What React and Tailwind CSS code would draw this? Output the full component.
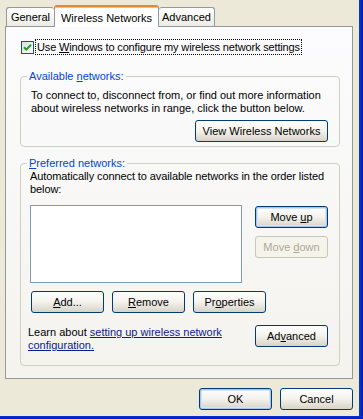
import { clsx } from 'clsx'

// ── Button ────────────────────────────────────────────────────
function Btn({ children, focus, disabled, className }) {
  return (
    <button
      className={clsx(
        'h-[22px] w-[73px] rounded-[3px] border text-[11px] leading-none whitespace-nowrap',
        disabled
          ? 'border-[#c9c7ba] bg-[#f5f4ea] text-[#aca899]'
          : 'border-[#003c74] bg-linear-to-b from-white via-[#f3f2ec] to-[#d8d3c6] text-black',
        focus && 'shadow-[inset_0_0_0_1px_#a9c4ee,inset_0_0_0_2px_#d4e2f7]',
        className
      )}
    >
      {children}
    </button>
  )
}

// ── Tab ───────────────────────────────────────────────────────
function Tab({ children, active, className }) {
  return (
    <div
      className={clsx(
        'flex justify-center whitespace-nowrap',
        active
          ? 'h-[22px] items-start pt-[3px] bg-white border-x border-[#919b9c] border-t-2 border-t-[#e68b2c] shadow-[inset_0_1px_0_#ffc73c] rounded-t-[3px]'
          : 'h-[19px] mb-px items-center pt-px bg-linear-to-b from-white to-[#ecebe5] border-t border-[#919b9c] rounded-t-[3px]',
        className
      )}
    >
      {children}
    </div>
  )
}

function CheckBox() {
  return (
    <div className="w-[13px] h-[13px] border border-[#1c5180] bg-linear-to-br from-[#dcdcd7] to-white flex items-center justify-center">
      <svg width="9" height="9" viewBox="0 0 9 9">
        <path d="M1 4.2 L3.3 6.6 L8 1.8" fill="none" stroke="#21a121" strokeWidth="2" />
      </svg>
    </div>
  )
}

export default function App() {
  return (
    <div className="w-[363px] h-[419px] flex flex-col font-['Liberation_Sans',Arial,sans-serif] text-[11px] text-black">
      <div className="flex h-[416px]">
        <div className="w-[359px] bg-[#ece9d8] pl-[5px] pt-[5px]">
          {/* tabs */}
          <div className="relative z-10 -mb-px flex items-end h-[22px] pl-px">
            <Tab className="w-[48px] border-l">General</Tab>
            <Tab active className="w-[105px]">Wireless Networks</Tab>
            <Tab className="w-[56px] border-r">Advanced</Tab>
          </div>

          {/* panel */}
          <div className="w-[348px] h-[353px] border border-[#919b9c] bg-linear-to-b from-[#fcfcfe] to-[#f4f3ee] pl-[14px] pt-[12px]">
            <div className="flex items-center h-[16px]">
              <div className="ml-px">
                <CheckBox />
              </div>
              <span className="ml-px h-[16px] border border-dotted border-black px-px leading-[14px] whitespace-nowrap tracking-[-0.15px]">
                Use <u>W</u>indows to configure my wireless network settings
              </span>
            </div>

            <fieldset className="mt-[15px] w-[320px] h-[77px] border border-[#d0d0bf] rounded-[4px] pl-[10px] pr-[11px]">
              <legend className="-ml-[4px] px-[2px] leading-[13px] text-[#0046d5]">
                Available <u>n</u>etworks:
              </legend>
              <p className="mt-[6px] leading-[13px] whitespace-nowrap">
                To connect to, disconnect from, or find out more information
                <br />
                about wireless networks in range, click the button below.
              </p>
              <div className="mt-[5px] flex justify-end">
                <Btn className="w-[133px]">View Wireless Networks</Btn>
              </div>
            </fieldset>

            <fieldset className="mt-[10px] w-[320px] h-[209px] border border-[#d0d0bf] rounded-[4px] pl-[9px] pr-[11px]">
              <legend className="-ml-[3px] px-[2px] leading-[13px] text-[#0046d5]">
                <u>P</u>referred networks:
              </legend>
              <p className="leading-[13px] whitespace-nowrap tracking-[-0.1px]">
                Automatically connect to available networks in the order listed
                <br />
                below:
              </p>
              <div className="mt-[9px] flex">
                <div className="w-[212px] h-[78px] border border-[#7f9db9] bg-white" />
                <div className="ml-auto mt-px flex flex-col gap-[8px]">
                  <Btn focus>
                    Move <u>u</u>p
                  </Btn>
                  <Btn disabled>
                    Move <u>d</u>own
                  </Btn>
                </div>
              </div>
              <div className="mt-[8px] ml-px flex gap-[8px]">
                <Btn>
                  <u>A</u>dd...
                </Btn>
                <Btn>
                  <u>R</u>emove
                </Btn>
                <Btn>
                  Pr<u>o</u>perties
                </Btn>
              </div>
              <div className="mt-[12px] flex items-start">
                <p className="-ml-[2px] mt-px leading-[13px] whitespace-nowrap">
                  Learn about{' '}
                  <span className="underline text-[#0b1a8f]">setting up wireless network</span>
                  <br />
                  <span className="underline text-[#0b1a8f]">configuration.</span>
                </p>
                <Btn className="ml-auto">
                  Ad<u>v</u>anced
                </Btn>
              </div>
            </fieldset>
          </div>

          {/* dialog buttons */}
          <div className="mt-[9px] flex justify-end gap-[8px] pr-[6px]">
            <Btn focus>OK</Btn>
            <Btn>Cancel</Btn>
          </div>
        </div>
        <div className="w-[4px] bg-linear-to-r from-[#0a3ad6] to-[#0019b8]" />
      </div>
      <div className="h-[3px] bg-linear-to-b from-[#0831d9] to-[#0019b8]" />
    </div>
  )
}
